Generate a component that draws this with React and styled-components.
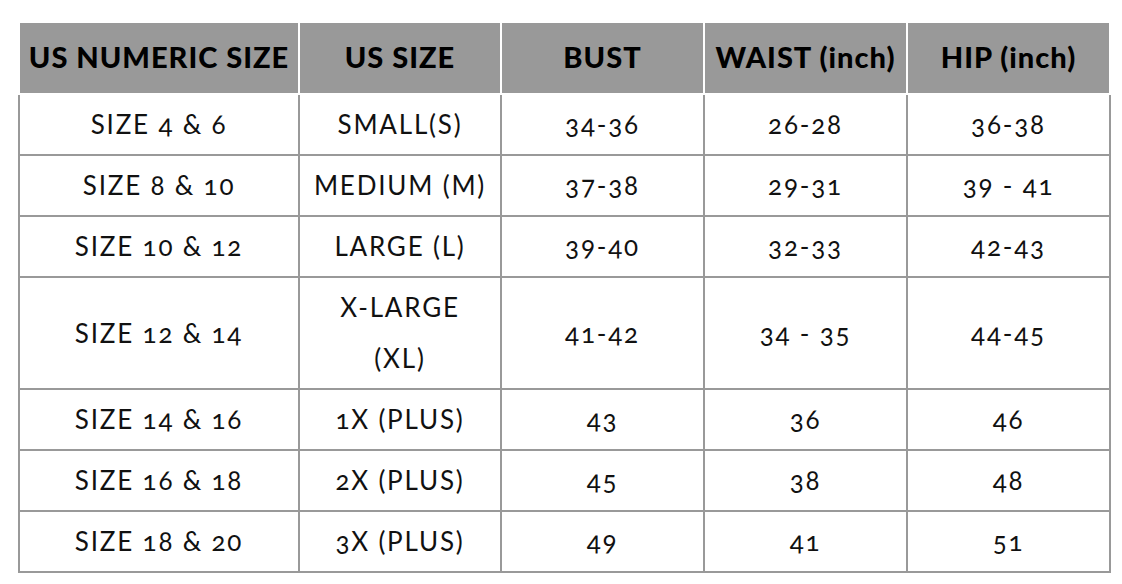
import React from 'react';
import styled, { createGlobalStyle } from 'styled-components';

const GlobalStyle = createGlobalStyle`
    html, body {
        margin: 0;
        padding: 0;
        background: #fff;
    }
`;

const Page = styled.main`
    padding: 21px 0 0 18px;
`;

const Table = styled.table`
    width: 1093px;
    border-collapse: collapse;
    table-layout: fixed;
    font-family: Lato, "Open Sans", sans-serif;
    font-variant-numeric: oldstyle-nums;
    color: #111;
`;

const HeadCell = styled.th`
    background-color: #999;
    border: 2px solid #fff;
    height: 67px;
    padding: 0 4px 3px;
    font-size: 29px;
    font-weight: 900;
    letter-spacing: 1px;
    color: #000;
    text-align: center;
    white-space: nowrap;
`;

const Cell = styled.td`
    border: 2px solid #999;
    padding: 4px 6px;
    font-size: 26px;
    letter-spacing: 1.8px;
    line-height: 51px;
    text-align: center;
    white-space: pre-line;
`;

const columns = [
    { label: 'US NUMERIC SIZE', width: 280 },
    { label: 'US SIZE', width: 202 },
    { label: 'BUST', width: 203 },
    { label: 'WAIST (inch)', width: 203 },
    { label: 'HIP (inch)', width: 203 },
];

const rows = [
    ['SIZE 4 & 6', 'SMALL(S)', '34-36', '26-28', '36-38'],
    ['SIZE 8 & 10', 'MEDIUM (M)', '37-38', '29-31', '39 - 41'],
    ['SIZE 10 & 12', 'LARGE (L)', '39-40', '32-33', '42-43'],
    ['SIZE 12 & 14', 'X-LARGE\n(XL)', '41-42', '34 - 35', '44-45'],
    ['SIZE 14 & 16', '1X (PLUS)', '43', '36', '46'],
    ['SIZE 16 & 18', '2X (PLUS)', '45', '38', '48'],
    ['SIZE 18 & 20', '3X (PLUS)', '49', '41', '51'],
];

const App = () => {
    return (
        <Page>
            <GlobalStyle />
            <Table>
                <colgroup>
                    {columns.map(col => <col key={col.label} style={{ width: col.width }} />)}
                </colgroup>
                <thead>
                    <tr>
                        {columns.map(col => <HeadCell key={col.label}>{col.label}</HeadCell>)}
                    </tr>
                </thead>
                <tbody>
                    {rows.map(row => (
                        <tr key={row[0]}>
                            {row.map((value, i) => <Cell key={i}>{value}</Cell>)}
                        </tr>
                    ))}
                </tbody>
            </Table>
        </Page>
    );
};

export default App;
